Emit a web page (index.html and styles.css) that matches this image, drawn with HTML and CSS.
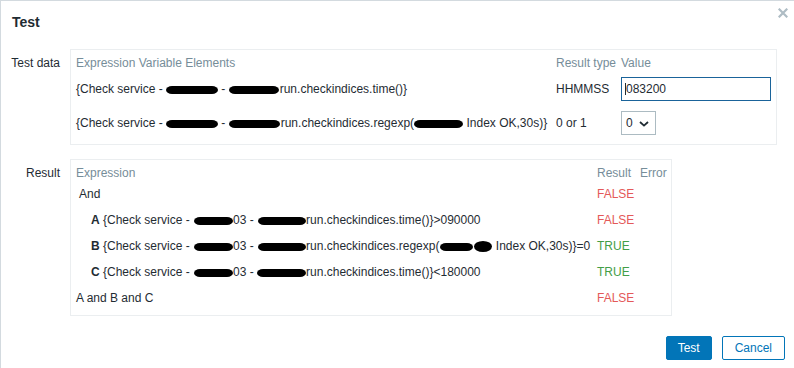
FILE: index.html
```html
<!DOCTYPE html>
<html lang="en">
<head>
<meta charset="utf-8">
<title>Test</title>
<link rel="stylesheet" href="styles.css">
</head>
<body>
<div class="dialog">
  <div class="dlg-head">
    <h4 class="dlg-title">Test</h4>
    <button class="dlg-close" aria-label="Close">
      <svg width="10" height="10" viewBox="0 0 10 10"><path d="M1.5 1.5 L8.5 8.5 M8.5 1.5 L1.5 8.5" stroke="#aebcc4" stroke-width="2.2" stroke-linecap="square" fill="none"/></svg>
    </button>
  </div>

  <div class="dlg-body">
    <div class="form-row">
      <div class="form-label">Test data</div>
      <div class="box box-data">
        <div class="th">Expression Variable Elements</div>
        <div class="th">Result type</div>
        <div class="th">Value</div>

        <div class="td">{Check service - <span class="blot w52"></span> - <span class="blot w50 mr1"></span>run.checkindices.time()}</div>
        <div class="td">HHMMSS</div>
        <div class="td"><div class="input"><span class="caret"></span>083200</div></div>

        <div class="td">{Check service - <span class="blot w52"></span> - <span class="blot w51 mr1"></span>run.checkindices.regexp(<span class="blot w49"></span> Index OK,30s)}</div>
        <div class="td">0 or 1</div>
        <div class="td"><div class="select">0<svg class="chev" width="10" height="6" viewBox="0 0 10 6"><path d="M1 1 L5 4.6 L9 1" stroke="#1f2c33" stroke-width="1.8" fill="none"/></svg></div></div>
      </div>
    </div>

    <div class="form-row">
      <div class="form-label">Result</div>
      <div class="box box-result">
        <div class="th">Expression</div>
        <div class="th">Result</div>
        <div class="th">Error</div>

        <div class="td ind1">And</div>
        <div class="td red">FALSE</div>
        <div class="td"></div>

        <div class="td ind2"><b>A</b> {Check service - <span class="blot w39 ml1"></span>03 - <span class="blot w48 ml1"></span>run.checkindices.time()}&gt;090000</div>
        <div class="td red">FALSE</div>
        <div class="td"></div>

        <div class="td ind2"><b>B</b> {Check service - <span class="blot w39 ml1"></span>03 - <span class="blot w48 ml1"></span>run.checkindices.regexp(<span class="blot w33 ml1"></span><span class="blot w18 tall ml1"></span> Index OK,30s)}=0</div>
        <div class="td green">TRUE</div>
        <div class="td"></div>

        <div class="td ind2"><b>C</b> {Check service - <span class="blot w39 ml1"></span>03 - <span class="blot w49"></span>run.checkindices.time()}&lt;180000</div>
        <div class="td green">TRUE</div>
        <div class="td"></div>

        <div class="td">A and B and C</div>
        <div class="td red">FALSE</div>
        <div class="td"></div>
      </div>
    </div>
  </div>

  <div class="dlg-foot">
    <button class="btn btn-primary">Test</button>
    <button class="btn btn-alt">Cancel</button>
  </div>
</div>
</body>
</html>
```

FILE: styles.css
```css
* { box-sizing: border-box; }

html, body {
  margin: 0;
  padding: 0;
  background: #ffffff;
}

body {
  font-family: "Liberation Sans", Arial, sans-serif;
  font-size: 12px;
  color: #1f2c33;
  width: 794px;
  height: 368px;
  overflow: hidden;
}

.dialog {
  width: 794px;
  height: 368px;
  border-top: 1px solid #d3dadf;
  border-left: 1px solid #d3dadf;
  background: #ffffff;
}

.dlg-head {
  display: flex;
  justify-content: space-between;
  align-items: flex-start;
  padding: 12px 6px 0 11px;
  height: 48px;
}

.dlg-title {
  margin: 0;
  font-size: 14px;
  line-height: 18px;
  font-weight: bold;
  color: #1f2c33;
}

.dlg-close {
  border: 0;
  background: transparent;
  padding: 0;
  margin: -5px 0 0 0;
  width: 10px;
  height: 10px;
  line-height: 0;
}

.dlg-body {
  display: flex;
  flex-direction: column;
  gap: 14px;
}

.form-row {
  display: flex;
  align-items: flex-start;
  gap: 10px;
}

.form-label {
  width: 59px;
  text-align: right;
  padding-top: 6px;
  line-height: 16px;
  white-space: nowrap;
}

.box {
  border: 1px solid #ebeef0;
  display: grid;
  align-items: center;
  white-space: nowrap;
  line-height: 16px;
}

.box-data {
  padding: 5px 5px 5px 5px;
  grid-template-columns: 480px 65px 150px;
  grid-template-rows: 16px 36px 32px;
}

.box-result {
  padding: 5px 5px 4px 5px;
  grid-template-columns: 521px 43px 26px;
  grid-template-rows: 16px 26px 26px 26px 26px 26px;
}

.th {
  color: #768d99;
}

.td b {
  font-weight: bold;
}

.ind1 { padding-left: 3px; }
.ind2 { padding-left: 15px; }

.red { color: #e45959; }
.green { color: #429e47; }

.blot {
  display: inline-block;
  height: 8px;
  background: #000000;
  border-radius: 6px / 4px;
  vertical-align: -1px;
}
.blot.tall { height: 11px; border-radius: 50%; vertical-align: -2px; }
.w18 { width: 18px; }
.w33 { width: 33px; }
.w39 { width: 39px; }
.w48 { width: 48px; }
.w49 { width: 49px; }
.w50 { width: 50px; }
.w51 { width: 51px; }
.w52 { width: 52px; }
.ml1 { margin-left: 1px; }
.mr1 { margin-right: 1px; }

.input {
  width: 150px;
  height: 24px;
  border: 1px solid #1a639a;
  padding: 0 0 0 3px;
  display: flex;
  align-items: center;
  color: #1f2c33;
}

.caret {
  display: inline-block;
  width: 1px;
  height: 12px;
  background: #1f2c33;
  margin-right: 0;
}

.select {
  width: 35px;
  height: 24px;
  border: 1px solid #acbbc2;
  padding: 0 0 0 4px;
  display: flex;
  align-items: center;
}

.chev {
  margin-left: 6px;
  margin-top: 1px;
}

.dlg-foot {
  display: flex;
  justify-content: flex-end;
  gap: 10px;
  padding-right: 9px;
  margin-top: 20px;
}

.btn {
  height: 24px;
  font-family: "Liberation Sans", Arial, sans-serif;
  font-size: 12px;
  line-height: 22px;
  border-radius: 2px;
  border: 1px solid #0275b8;
  cursor: pointer;
}

.btn-primary {
  background: #0275b8;
  color: #ffffff;
  padding: 0 11px;
}

.btn-alt {
  background: #ffffff;
  color: #0275b8;
  padding: 0 12px;
}
```
